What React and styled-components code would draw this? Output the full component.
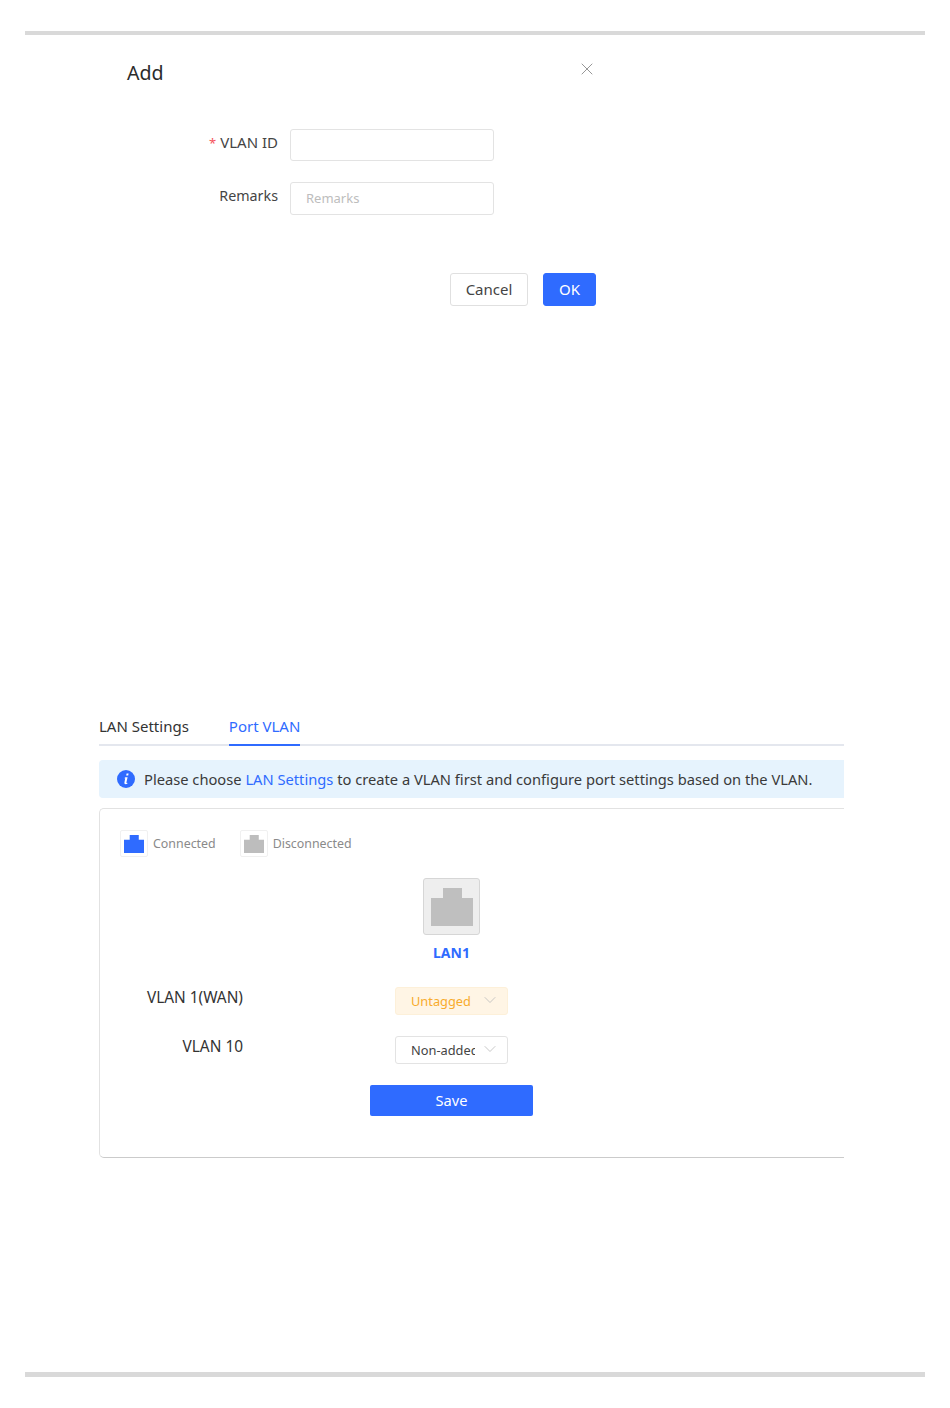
import styled, { createGlobalStyle } from "styled-components";
import { X, ChevronDown } from "lucide-react";

const GlobalStyle = createGlobalStyle`
  html, body {
    margin: 0;
    padding: 0;
    background: #fff;
  }
  * {
    box-sizing: border-box;
  }
  body {
    font-family: "Noto Sans", "Open Sans", sans-serif;
    color: #333;
  }
`;

const Page = styled.div`
  width: 950px;
  height: 1408px;
  padding: 31px 25px;
  display: flex;
  flex-direction: column;
`;

const Rule = styled.div`
  height: ${(props) => props.$h}px;
  background: #d9d9d9;
  flex-shrink: 0;
`;

const Modal = styled.div`
  width: 497px;
  height: 670px;
  margin-left: 75px;
  padding: 0 0 0 27px;
  display: flex;
  flex-direction: column;
`;

const ModalHead = styled.div`
  height: 94px;
  padding-top: 25px;
  display: flex;
  justify-content: space-between;
  align-items: flex-start;
`;

const Title = styled.h2`
  margin: 0;
  font-size: 19.6px;
  line-height: 26px;
  font-weight: 400;
  color: #2b2b2b;
`;

const CloseIcon = styled(X)`
  margin-top: -1px;
  color: #8c8c8c;
`;

const FormRow = styled.div`
  display: flex;
  align-items: flex-start;
  margin-bottom: ${(props) => props.$mb}px;
`;

const Label = styled.label`
  width: 151px;
  padding-top: ${(props) => (props.$tight ? 4 : 3)}px;
  font-size: ${(props) => (props.$tight ? 14.3 : 15)}px;
  line-height: 20px;
  text-align: right;
  color: #444;
`;

const Star = styled.span`
  color: #f5535c;
  font-size: 13px;
  margin-right: 4px;
`;

const Input = styled.div`
  width: 204px;
  height: ${(props) => props.$h}px;
  margin-left: 12px;
  border: 1px solid #e3e3e3;
  border-radius: 3px;
  padding-left: 15px;
  font-size: 13px;
  line-height: 30px;
  color: #bdbdbd;
`;

const ModalFoot = styled.div`
  margin-top: 58px;
  width: 469px;
  display: flex;
  justify-content: flex-end;
  gap: 15px;
`;

const Button = styled.button`
  height: 33px;
  width: ${(props) => props.$w}px;
  padding: 0 0 2px;
  font-family: inherit;
  font-size: 15px;
  border-radius: 3px;
  border: 1px solid ${(props) => (props.$primary ? "#2f6bff" : "#e0e0e0")};
  background: ${(props) => (props.$primary ? "#2f6bff" : "#fff")};
  color: ${(props) => (props.$primary ? "#fff" : "#444")};
`;

const Section = styled.div`
  width: 745px;
  margin-left: 74px;
  display: flex;
  flex-direction: column;
`;

const Tabs = styled.div`
  height: 41px;
  display: flex;
  gap: 40px;
  border-bottom: 2px solid #e4e7ee;
`;

const Tab = styled.div`
  height: 41px;
  padding-top: 11px;
  font-size: 15px;
  line-height: 20px;
  color: ${(props) => (props.$active ? "#2f6bff" : "#333")};
  border-bottom: 2px solid ${(props) => (props.$active ? "#2f6bff" : "transparent")};
`;

const Alert = styled.div`
  margin-top: 14px;
  height: 38px;
  padding-left: 18px;
  display: flex;
  align-items: center;
  gap: 9px;
  background: #e6f3fd;
  border-radius: 4px 0 0 4px;
  font-size: 14.7px;
  color: #3a3a3a;
  white-space: nowrap;
`;

const Link = styled.span`
  color: #2f6bff;
`;

const Panel = styled.div`
  margin-top: 10px;
  height: 350px;
  border: 1px solid #e2e2e2;
  border-bottom-color: #cbcbcb;
  border-right: none;
  border-radius: 5px 0 0 5px;
  padding: 21px 0 0 20px;
`;

const Legend = styled.div`
  display: flex;
  gap: 24px;
`;

const LegendItem = styled.div`
  display: flex;
  align-items: center;
  gap: 5px;
  font-size: 12.4px;
  color: #8a8a8a;
`;

const LegendBox = styled.div`
  width: 28px;
  height: 27px;
  border: 1px solid #f0f0f0;
  border-radius: 2px;
  display: flex;
  align-items: center;
  justify-content: center;
`;

const PortBox = styled.div`
  width: 57px;
  height: 57px;
  margin: 21px 0 0 303px;
  background: #eeeeee;
  border: 1px solid #d6d6d6;
  border-radius: 3px;
  display: flex;
  align-items: center;
  justify-content: center;
`;

const PortName = styled.div`
  width: 57px;
  margin: 9px 0 0 303px;
  text-align: center;
  font-size: 14px;
  font-weight: 700;
  line-height: 18px;
  color: #2f6bff;
`;

const VlanRow = styled.div`
  display: flex;
  align-items: flex-start;
  height: 28px;
  margin-top: ${(props) => props.$mt}px;
`;

const VlanName = styled.div`
  width: 123px;
  font-size: 15.4px;
  line-height: 20px;
  margin-top: 1px;
  text-align: right;
  color: #333;
`;

const Select = styled.div`
  width: 113px;
  height: 28px;
  margin-left: 152px;
  padding-left: 15px;
  display: flex;
  align-items: center;
  border-radius: 3px;
  border: 1px solid ${(props) => (props.$warn ? "#fdf0d9" : "#e3e3e3")};
  background: ${(props) => (props.$warn ? "#fff5e5" : "#fff")};
  color: ${(props) => (props.$warn ? "#f8ab2c" : "#444")};
  font-size: 12.8px;
`;

const SelectText = styled.span`
  width: 64px;
  overflow: hidden;
  white-space: nowrap;
`;

const Caret = styled(ChevronDown)`
  margin: -2px 0 0 5px;
  color: #bdbdbd;
`;

const SaveButton = styled.button`
  display: block;
  width: 163px;
  height: 31px;
  margin: 21px 0 0 250px;
  padding: 0 0 2px;
  border: none;
  border-radius: 2px;
  background: #2f6bff;
  color: #fff;
  font-family: inherit;
  font-size: 14.6px;
`;

const Spacer = styled.div`
  flex: 1;
`;

const PortIcon = ({ size, color }) => (
  <svg width={size} height={size} viewBox="0 0 42 38" fill={color}>
    <path d="M0 10h12V0h19v10h11v28H0z" />
  </svg>
);

const InfoIcon = () => (
  <svg width="18" height="18" viewBox="0 0 18 18">
    <circle cx="9" cy="9" r="9" fill="#2f6bff" />
    <path d="M9.6 3.6h2l-.4 2h-2zM8.4 7.2h2.2L9.4 12.6c-.1.5.3.6 1.100.2l-.2 1c-1.500.8-3.200.5-2.900-1l.8-4.500h-1z" fill="#fff" />
  </svg>
);

const App = () => {
  return (
    <>
      <GlobalStyle />
      <Page>
        <Rule $h={4} />
        <Modal>
          <ModalHead>
            <Title>Add</Title>
            <CloseIcon size={20} strokeWidth={1.1} />
          </ModalHead>
          <FormRow $mb={21}>
            <Label>
              <Star>*</Star>VLAN ID
            </Label>
            <Input $h={32} />
          </FormRow>
          <FormRow $mb={0}>
            <Label $tight>Remarks</Label>
            <Input $h={33}>Remarks</Input>
          </FormRow>
          <ModalFoot>
            <Button $w={78}>Cancel</Button>
            <Button $w={53} $primary>
              OK
            </Button>
          </ModalFoot>
        </Modal>
        <Section>
          <Tabs>
            <Tab>LAN Settings</Tab>
            <Tab $active>Port VLAN</Tab>
          </Tabs>
          <Alert>
            <InfoIcon />
            <span>
              Please choose <Link>LAN Settings</Link> to create a VLAN first and configure port settings based on the VLAN.
            </span>
          </Alert>
          <Panel>
            <Legend>
              <LegendItem>
                <LegendBox>
                  <PortIcon size={20} color="#2f6bff" />
                </LegendBox>
                Connected
              </LegendItem>
              <LegendItem>
                <LegendBox>
                  <PortIcon size={20} color="#bdbdbd" />
                </LegendBox>
                Disconnected
              </LegendItem>
            </Legend>
            <PortBox>
              <PortIcon size={42} color="#bfbfbf" />
            </PortBox>
            <PortName>LAN1</PortName>
            <VlanRow $mt={25}>
              <VlanName>VLAN 1(WAN)</VlanName>
              <Select $warn>
                <SelectText>Untagged</SelectText>
                <Caret size={20} strokeWidth={1} />
              </Select>
            </VlanRow>
            <VlanRow $mt={21}>
              <VlanName>VLAN 10</VlanName>
              <Select>
                <SelectText>Non-added</SelectText>
                <Caret size={20} strokeWidth={1} />
              </Select>
            </VlanRow>
            <SaveButton>Save</SaveButton>
          </Panel>
        </Section>
        <Spacer />
        <Rule $h={5} />
      </Page>
    </>
  );
};

export default App;
